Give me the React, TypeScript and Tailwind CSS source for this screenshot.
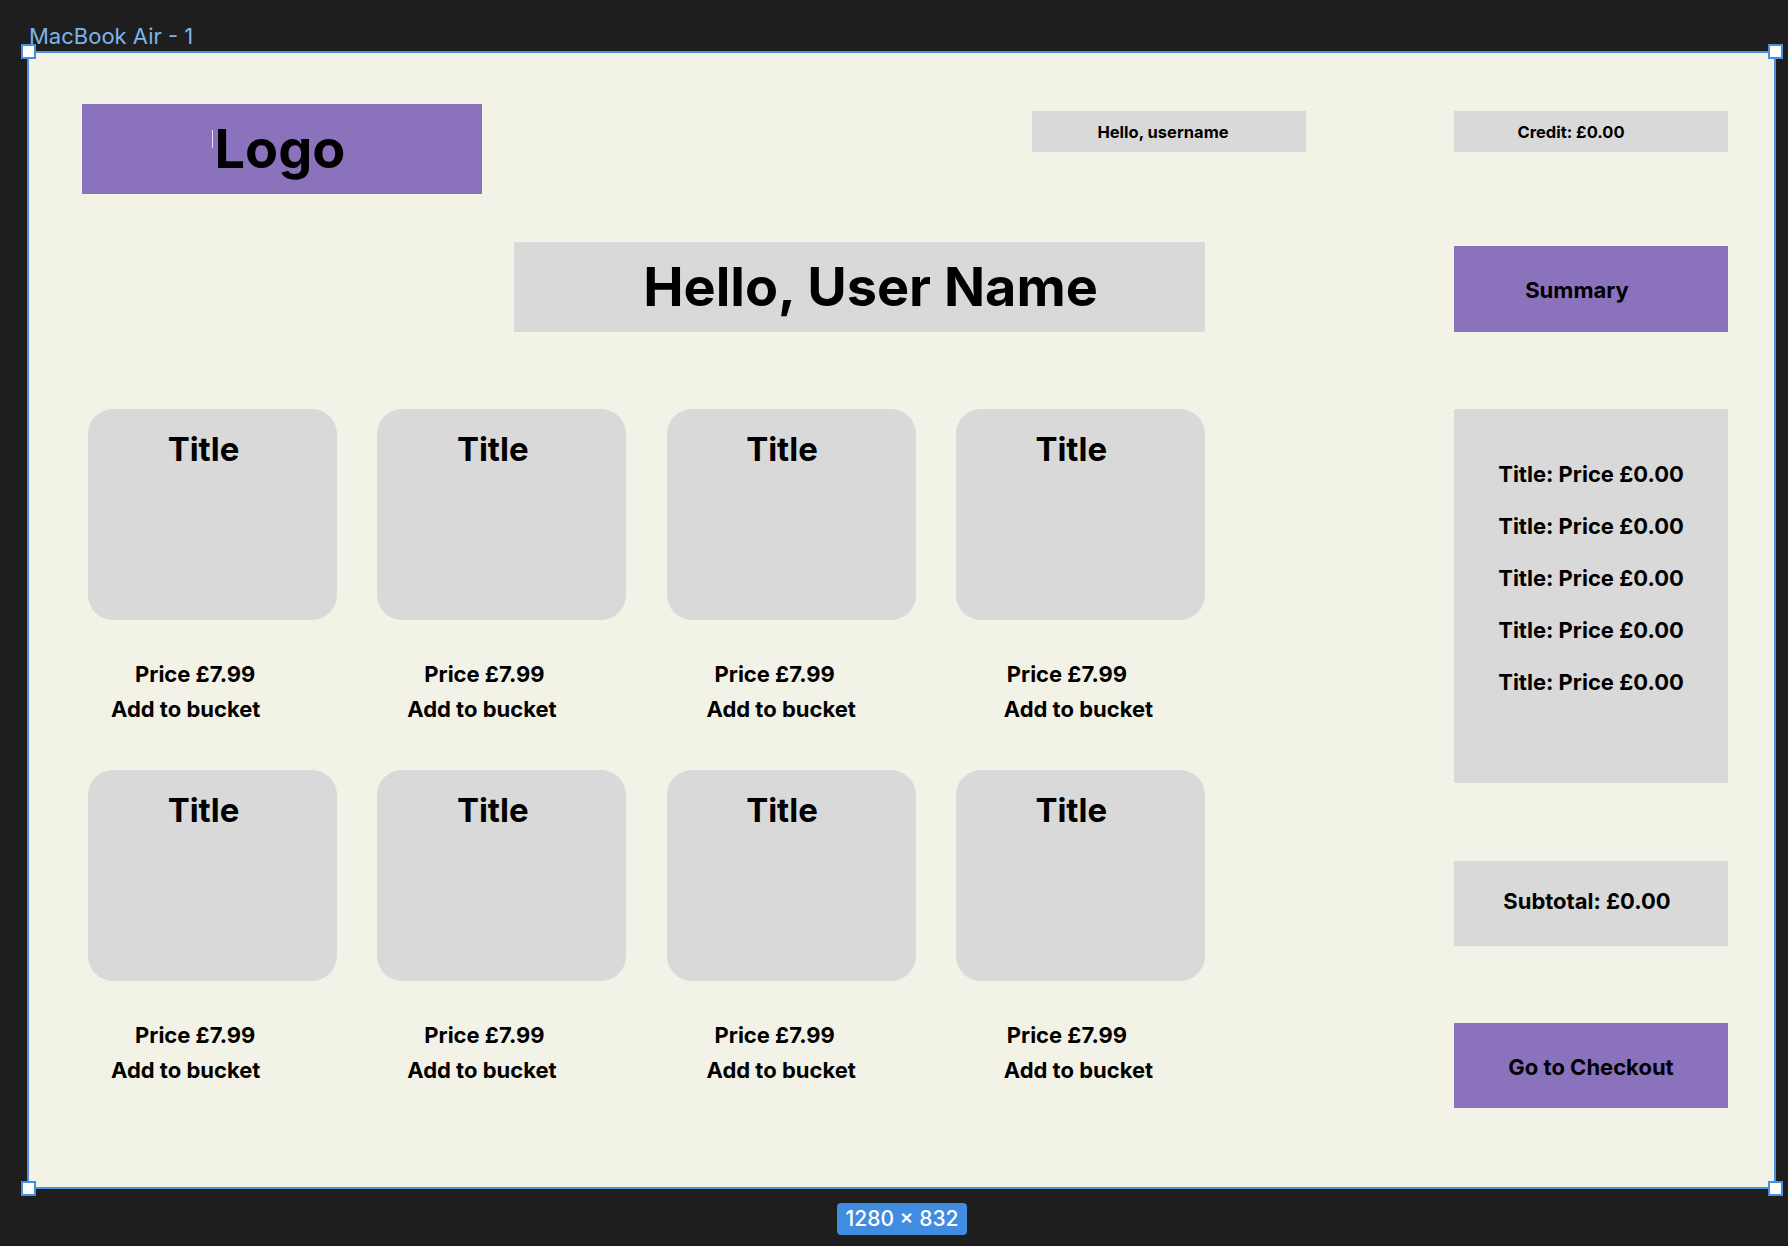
import React from "react";

const cards = [
  { id: 1, priceMl: "ml-[47px]", addMl: "ml-[23px]" },
  { id: 2, priceMl: "ml-[47px]", addMl: "ml-[30px]" },
  { id: 3, priceMl: "ml-[48px]", addMl: "ml-[40px]" },
  { id: 4, priceMl: "ml-[51px]", addMl: "ml-[48px]" },
  { id: 5, priceMl: "ml-[47px]", addMl: "ml-[23px]" },
  { id: 6, priceMl: "ml-[47px]", addMl: "ml-[30px]" },
  { id: 7, priceMl: "ml-[48px]", addMl: "ml-[40px]" },
  { id: 8, priceMl: "ml-[51px]", addMl: "ml-[48px]" },
];

const summaryItems = [1, 2, 3, 4, 5];

function Handle({ pos }: { pos: string }) {
  return <div className={`absolute h-[15px] w-[15px] border-2 border-[#4a8fdd] bg-white ${pos}`} />;
}

function ProductCard({ priceMl, addMl }: { priceMl: string; addMl: string }) {
  return (
    <div className="flex flex-col">
      <div className="h-[211px] w-[249px] rounded-[25px] bg-[#d9d9d9] pt-[20px] pr-[18px] text-center text-[33px] leading-[40px] font-[650]">
        Title
      </div>
      <div className={`mt-[40px] text-[22px] leading-[28px] font-[650] ${priceMl}`}>Price £7.99</div>
      <div className={`mt-[7px] text-[22px] leading-[28px] font-[650] ${addMl}`}>Add to bucket</div>
    </div>
  );
}

export default function App() {
  return (
    <div className="h-[1246px] w-[1788px] overflow-hidden bg-[#1e1e1e] font-['Inter','Noto_Sans',sans-serif] text-black">
      <div className="ml-[29px] pt-[23px] text-[22px] leading-[26px] text-[#7db4ea]">MacBook Air - 1</div>

      <div className="relative mt-[2px] ml-[27px] h-[1138px] w-[1749px] border-2 border-[#4a8fdd] bg-[#f2f3e6]">
        <Handle pos="-left-[8px] -top-[9px]" />
        <Handle pos="-right-[9px] -top-[9px]" />
        <Handle pos="-left-[8px] -bottom-[9px]" />
        <Handle pos="-right-[9px] -bottom-[9px]" />

        <div className="flex">
          {/* main column */}
          <div className="w-[1425px]">
            <div className="flex items-start">
              <div className="relative mt-[51px] ml-[53px] flex h-[90px] w-[400px] items-center justify-center bg-[#8a72bd] pr-[4px] text-[54px] leading-[64px] font-bold">
                <span className="relative">
                  <span className="absolute -left-[3px] top-[13px] h-[18px] w-px bg-[#e6e0f2]" />
                  Logo
                </span>
              </div>
              <div className="mt-[58px] ml-[550px] flex h-[41px] w-[274px] items-center justify-center bg-[#d9d9d9] pt-[2px] pr-[12px] text-[16.5px] font-[650]">
                Hello, username
              </div>
            </div>

            <div className="mt-[48px] ml-[485px] flex h-[90px] w-[691px] items-center justify-center bg-[#d9d9d9] pl-[22px] text-[54px] leading-[64px] font-bold">
              Hello, User Name
            </div>

            <div className="mt-[77px] ml-[59px] grid w-[1117px] grid-cols-4 gap-x-[40px] gap-y-[47px]">
              {cards.map((c) => (
                <ProductCard key={c.id} priceMl={c.priceMl} addMl={c.addMl} />
              ))}
            </div>
          </div>

          {/* sidebar */}
          <div className="flex w-[274px] flex-col">
            <div className="mt-[58px] flex h-[41px] items-center justify-center bg-[#d9d9d9] pt-[2px] pr-[40px] text-[16.5px] font-[650]">
              Credit: £0.00
            </div>
            <div className="mt-[94px] flex h-[86px] items-center justify-center bg-[#8a72bd] pt-[2px] pr-[28px] text-[22px] font-[650]">
              Summary
            </div>
            <div className="mt-[77px] flex h-[374px] flex-col items-center gap-[24px] bg-[#d9d9d9] pt-[51px] text-[22px] leading-[28px] font-[650]">
              {summaryItems.map((i) => (
                <div key={i}>Title: Price £0.00</div>
              ))}
            </div>
            <div className="mt-[78px] flex h-[85px] items-center justify-center bg-[#d9d9d9] pr-[8px] pb-[4px] text-[22px] font-[650]">
              Subtotal: £0.00
            </div>
            <div className="mt-[77px] flex h-[85px] items-center justify-center bg-[#8a72bd] pt-[4px] text-[22px] font-[650]">
              Go to Checkout
            </div>
          </div>
        </div>
      </div>

      <div className="mt-[14px] ml-[837px] flex h-[32px] w-[130px] items-center justify-center rounded-[4px] bg-[#3f8ce0] text-[21px] font-medium text-white">
        1280 × 832
      </div>
    </div>
  );
}
